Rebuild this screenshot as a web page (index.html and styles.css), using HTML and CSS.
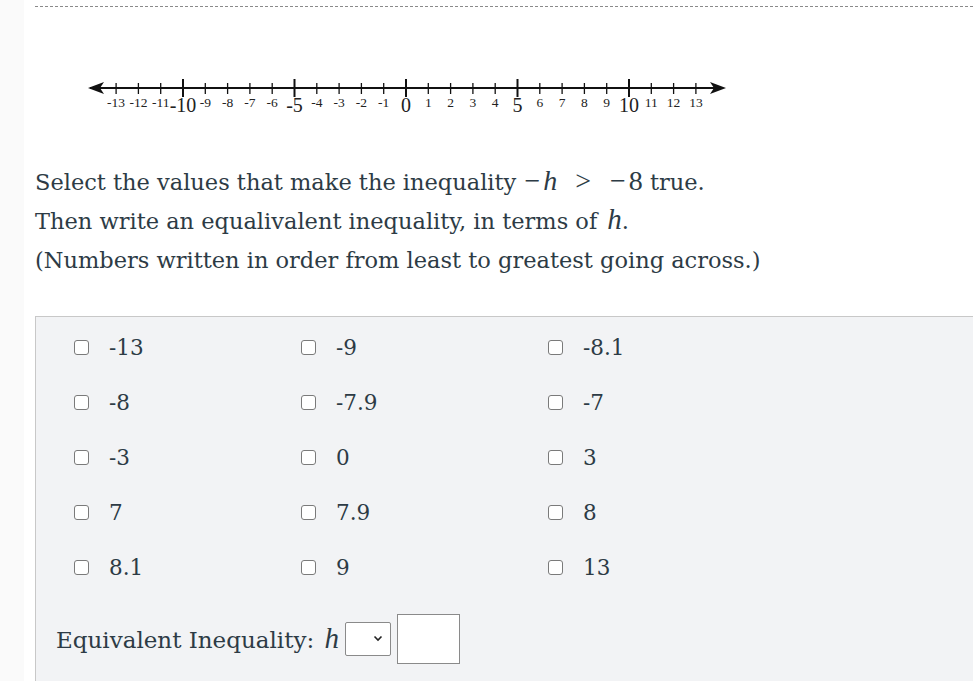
FILE: index.html
```html
<!DOCTYPE html>
<html>
<head>
<meta charset="utf-8">
<link rel="stylesheet" href="styles.css">
</head>
<body>
<div class="page">
  <div class="gutter"></div>
  <main class="content">
    <div class="rule"></div>
    <div class="numberline">
      <svg width="660" height="50" viewBox="0 0 660 50" class="nl-svg">
        <g stroke="#111" stroke-width="2">
          <line x1="10" y1="18" x2="640" y2="18"/>
        </g>
        <path d="M8 18 L24 12 L20 18 L24 24 Z" fill="#111"/>
        <path d="M646 18 L630 12 L634 18 L630 24 Z" fill="#111"/>
        <g stroke="#111" stroke-width="1.3" id="ticks"></g>
        <g id="labels" font-family="'Liberation Serif', serif" fill="#222"></g>
      </svg>
    </div>
    <p class="prompt">
      Select the values that make the inequality <span class="math"><span class="op">&minus;</span><i>h</i><span class="rel">&gt;</span><span class="op">&minus;</span>8</span> true.<br>
      Then write an equalivalent inequality, in terms of <i class="var">h</i>.<br>
      (Numbers written in order from least to greatest going across.)
    </p>
    <section class="panel">
      <div class="choices">
        <label class="choice"><span class="box"></span><span>-13</span></label>
        <label class="choice"><span class="box"></span><span>-9</span></label>
        <label class="choice"><span class="box"></span><span>-8.1</span></label>
        <label class="choice"><span class="box"></span><span>-8</span></label>
        <label class="choice"><span class="box"></span><span>-7.9</span></label>
        <label class="choice"><span class="box"></span><span>-7</span></label>
        <label class="choice"><span class="box"></span><span>-3</span></label>
        <label class="choice"><span class="box"></span><span>0</span></label>
        <label class="choice"><span class="box"></span><span>3</span></label>
        <label class="choice"><span class="box"></span><span>7</span></label>
        <label class="choice"><span class="box"></span><span>7.9</span></label>
        <label class="choice"><span class="box"></span><span>8</span></label>
        <label class="choice"><span class="box"></span><span>8.1</span></label>
        <label class="choice"><span class="box"></span><span>9</span></label>
        <label class="choice"><span class="box"></span><span>13</span></label>
      </div>
      <div class="equiv">
        <span class="equiv-label">Equivalent Inequality: <i class="var">h</i></span>
        <span class="select"><svg width="10" height="7" viewBox="0 0 10 7"><path d="M1.5 1.5 L5 5 L8.5 1.5" fill="none" stroke="#222" stroke-width="1.6"/></svg></span>
        <span class="textbox"></span>
      </div>
    </section>
  </main>
</div>
<script>
(function(){
  var ns="http://www.w3.org/2000/svg";
  var t=document.getElementById("ticks"), l=document.getElementById("labels");
  var zero=326, u=22.3;
  for(var i=-13;i<=13;i++){
    var x=zero+i*u, major=(i%5===0);
    var ln=document.createElementNS(ns,"line");
    ln.setAttribute("x1",x);ln.setAttribute("x2",x);
    ln.setAttribute("y1",major?9:13);ln.setAttribute("y2",major?27:24);
    if(major) ln.setAttribute("stroke-width","2");
    t.appendChild(ln);
    var tx=document.createElementNS(ns,"text");
    tx.textContent=(i<0?"-":"")+Math.abs(i);
    tx.setAttribute("x",x);tx.setAttribute("text-anchor","middle");
    tx.setAttribute("y",major?42:37);
    tx.setAttribute("font-size",major?"20":"13.5");
    l.appendChild(tx);
  }
})();
</script>
</body>
</html>
```
FILE: styles.css
```css
html, body {
  margin: 0;
  padding: 0;
  background: #ffffff;
}
body {
  font-family: "DejaVu Serif", Georgia, serif;
  color: #2d3b45;
  width: 973px;
  height: 681px;
  overflow: hidden;
}
.page {
  display: flex;
  height: 681px;
}
.gutter {
  width: 24px;
  flex: none;
  background: #fafafa;
}
.content {
  flex: 1;
  padding-left: 11px;
  min-width: 0;
}
.rule {
  margin-top: 6px;
  border-top: 1px dashed #8a8a8a;
  height: 0;
}
.numberline {
  margin-top: 63px;
  padding-left: 45px;
  height: 50px;
}
.nl-svg {
  display: block;
}
.prompt {
  margin: 43px 0 0 0;
  font-size: 22.5px;
  line-height: 39px;
}
.prompt .math {
  font-family: "Liberation Serif", serif;
  font-size: 28px;
  line-height: 1;
}
.prompt .op {
  padding: 0 3px 0 1px;
}
.prompt .rel {
  margin: 0 18px;
}
.var {
  font-family: "Liberation Serif", serif;
  font-size: 29px;
  line-height: 1;
  padding-left: 3px;
}
.panel {
  margin-top: 36px;
  background: #f2f3f5;
  border-top: 1px solid #c8c8c8;
  border-left: 1px solid #c8c8c8;
  padding: 15px 0 0 38px;
  height: 400px;
}
.choices {
  display: grid;
  grid-template-columns: 227px 247px 200px;
  grid-auto-rows: 55.2px;
}
.choice {
  display: flex;
  align-items: center;
  gap: 20px;
  font-size: 21.5px;
  height: 30px;
}
.box {
  width: 13px;
  height: 13px;
  border: 1px solid #7a7a7a;
  border-radius: 3px;
  background: #fff;
  flex: none;
}
.equiv {
  display: flex;
  align-items: center;
  margin-top: 6px;
  margin-left: -18px;
}
.equiv-label {
  font-size: 23px;
}
.select {
  display: flex;
  align-items: center;
  justify-content: flex-end;
  box-sizing: border-box;
  width: 46px;
  height: 34px;
  margin-left: 6px;
  border: 1px solid #8a8a8a;
  border-radius: 2px;
  background: #fff;
  padding-right: 7px;
}
.textbox {
  display: block;
  box-sizing: border-box;
  width: 63px;
  height: 50px;
  margin-left: 6px;
  border: 1px solid #8a8a8a;
  background: #fff;
}
```
